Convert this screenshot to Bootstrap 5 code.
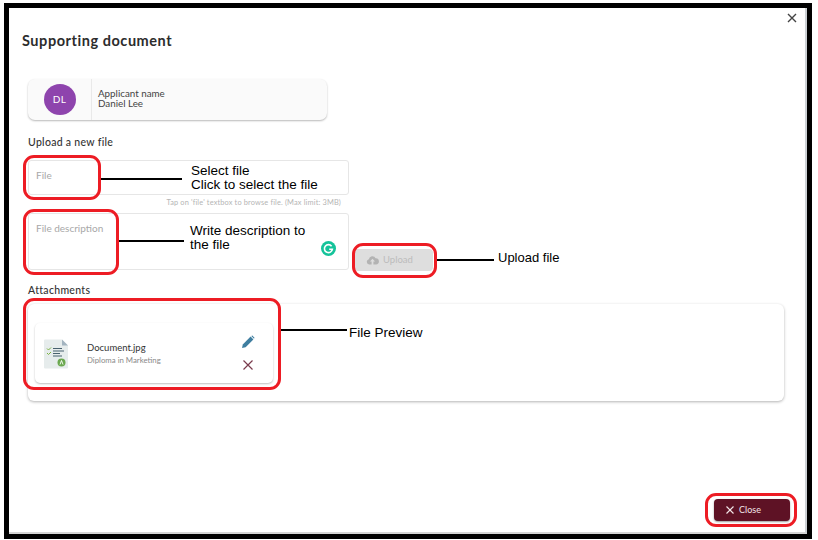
<!DOCTYPE html>
<html lang="en">
<head>
<meta charset="utf-8">
<title>Supporting document</title>
<link href="https://cdn.jsdelivr.net/npm/bootstrap@5.3.0/dist/css/bootstrap.min.css" rel="stylesheet">
<style>
html,body{height:100%;background:#fff;overflow:hidden}
body{font-family:"Lato","Open Sans",sans-serif;color:#333}
.shot-frame{position:relative;box-sizing:border-box;margin:3px 0 0 4px;width:808px;height:536px;border:5px solid #000;background:#fff}
.dlg-body{position:relative;height:100%;border-right:2px solid #ccd0d4;border-bottom:2px solid #d4d4d4;padding:0 0 0 13px;display:flex;flex-direction:column}
.dlg-title{font-size:14.5px;font-weight:700;color:#2c2c2c;margin:24px 0 0 0;line-height:17px;letter-spacing:.55px}
.dlg-x{position:absolute;right:6px;top:3px;width:14px;height:14px;padding:0;border:0;background:none;line-height:0}
.applicant{width:299px;height:41px;margin:30px 0 0 6px;background:#fafafa;border-radius:7px;box-shadow:0 1px 2px rgba(0,0,0,.28)}
.avatar-col{width:64px;border-right:1px solid #e9e9e9}
.avatar-dot{width:32px;height:31px;border-radius:50%;background:#8e44ad;color:#fff;font-size:10px;letter-spacing:.4px}
.app-txt{font-size:9.800px;line-height:10px;padding:0 0 4px 6px;color:#444}
.sect-label{font-size:10.500px;line-height:12px;color:#333;font-weight:500;margin-left:6px;letter-spacing:.3px}
.up-label{margin-top:16px}
.file-box{width:321px;border:1px solid #e6e6e6;border-radius:3px;margin-left:6px;background:#fff;font-size:10px;color:#a8a8a8;padding:0 7px}
.file-one{height:35px;margin-top:12px;padding-top:7px;line-height:14px}
.hint-txt{width:313px;margin:3px 0 0 6px;text-align:right;font-size:7.400px;line-height:10px;color:#b5b5b5;letter-spacing:.15px}
.desc-row{margin-top:5px}
.file-two{height:57px;padding-top:8px;line-height:12px;position:relative}
.gly-g{position:absolute;right:12px;bottom:13px;width:15px;height:15px;border-radius:50%;background:#15c39a;line-height:0}
.up-btn,.up-btn:disabled{width:79px;height:22px;margin:0 0 -1px 5px;padding:0 0 0 12px;border:0;border-radius:4px;background:#dedede;color:#bcbcbc;font-size:9.500px;opacity:1}
.att-label{margin-top:14px}
.att-panel{width:756px;height:97px;margin:8px 0 0 6px;background:#fff;border-radius:6px;box-shadow:0 1px 3px rgba(0,0,0,.3);padding:19px 0 0 7px}
.doc-card{width:238px;height:60px;background:#fff;border-radius:5px;box-shadow:0 1px 2px rgba(0,0,0,.25);padding:2px 17px 0 8px}
.doc-ic{width:26px;height:30px;margin-right:18px;line-height:0}
.doc-name{font-size:9.500px;line-height:12px;color:#333}
.doc-sub{font-size:7.800px;line-height:13px;color:#8a8a8a}
.doc-tools{width:16px;gap:10px;line-height:0;margin-top:-2px}
.foot-row{margin-top:auto;padding:0 15px 11px 0}
.close-btn{width:76px;height:22px;padding:0 0 0 11px;border:0;border-radius:4px;background:#5e1225;color:#f2e6e8;font-size:9px;box-shadow:0 1px 2px rgba(0,0,0,.4)}
.close-btn:hover{background:#5e1225;color:#f2e6e8}
.note-ring{position:absolute;border:3px solid #ed1c24;border-radius:11px;pointer-events:none}
.note-line{position:absolute;height:2px;background:#000}
.note-txt{position:absolute;font-family:"Liberation Sans",Arial,sans-serif;font-size:13.500px;line-height:14px;color:#000;white-space:nowrap}
.ring-a{left:14px;top:147px;width:78px;height:45px}
.ring-b{left:14px;top:201px;width:96px;height:66px}
.ring-c{left:343px;top:235px;width:85px;height:35px}
.ring-d{left:14px;top:290px;width:258px;height:92px}
.ring-e{left:696px;top:485px;width:92px;height:34px}
.line-a{left:92px;top:170px;width:81px}
.line-b{left:110px;top:232px;width:65px}
.line-c{left:428px;top:251px;width:57px}
.line-d{left:272px;top:321px;width:66px}
.txt-a{left:182px;top:156px}
.txt-b{left:181px;top:216px}
.txt-c{left:489px;top:243px;font-size:13px}
.txt-d{left:340px;top:318px}
</style>
</head>
<body>
<div class="shot-frame">
  <div class="dlg-body">
    <button class="dlg-x" type="button" aria-label="Close"><svg width="14" height="14" viewBox="0 0 14 14"><path d="M3 3l8 8M11 3l-8 8" stroke="#444" stroke-width="1.400" fill="none"/></svg></button>
    <h5 class="dlg-title">Supporting document</h5>
    <div class="applicant d-flex">
      <div class="avatar-col d-flex align-items-center justify-content-center"><div class="avatar-dot d-flex align-items-center justify-content-center">DL</div></div>
      <div class="app-txt d-flex flex-column justify-content-center"><div>Applicant name</div><div>Daniel Lee</div></div>
    </div>
    <div class="sect-label up-label">Upload a new file</div>
    <div class="file-box file-one">File</div>
    <div class="hint-txt">Tap on 'file' textbox to browse file. (Max limit: 3MB)</div>
    <div class="desc-row d-flex align-items-end">
      <div class="file-box file-two">File description
        <span class="gly-g d-inline-block"><svg width="15" height="15" viewBox="0 0 15 15"><path d="M10.600 5.200A4 4 0 1 0 11.400 8.200H8.200" stroke="#fff" stroke-width="1.600" fill="none"/></svg></span>
      </div>
      <button class="btn up-btn d-flex align-items-center gap-1" type="button" disabled><svg width="13" height="10" viewBox="0 0 13 10"><path d="M3.200 9.500A2.700 2.700 0 0 1 2.800 4.200 3.600 3.600 0 0 1 9.600 3.300 3.100 3.100 0 0 1 10 9.500H7.400V6.400H9L6.500 3.800 4 6.400h1.600v3.100z" fill="#b3b3b3"/></svg>Upload</button>
    </div>
    <div class="sect-label att-label">Attachments</div>
    <div class="att-panel">
      <div class="doc-card d-flex align-items-center">
        <div class="doc-ic"><svg width="26" height="30" viewBox="0 0 26 30"><path d="M1 1.500Q1 .5 2 .5H19L25 6.500V28.500Q25 29.500 24 29.500H2Q1 29.500 1 28.500z" fill="#e6ecec"/><path d="M19 .5L25 6.500H19z" fill="#a3b4c0"/><path d="M4 9.500l1.500 1.500 2.500-2.500M4 14l1.500 1.500 2.500-2.500" stroke="#7cb342" stroke-width="1" fill="none"/><path d="M10 9.500h9M10 12h11M10 14.500h7M10 17h9" stroke="#47606e" stroke-width="1"/><circle cx="18.500" cy="23.500" r="4" fill="#6aa84f"/><path d="M17 25.500l1.500-4 1.500 4" stroke="#fff" stroke-width=".9" fill="none"/></svg></div>
        <div class="flex-grow-1"><div class="doc-name">Document.jpg</div><div class="doc-sub">Diploma in Marketing</div></div>
        <div class="doc-tools d-flex flex-column align-items-center">
          <svg width="14" height="14" viewBox="0 0 14 14"><path d="M1 13l.8-3.600L9.600 1.600l2.800 2.800L4.600 12.200z" fill="#3f7ea0"/><path d="M10.300 1l1-.5 2.200 2.200-.5 1z" fill="#3f7ea0"/></svg>
          <svg width="12" height="12" viewBox="0 0 12 12"><path d="M1.500 1.500l9 9M10.500 1.500l-9 9" stroke="#7a3b4d" stroke-width="1.200" fill="none"/></svg>
        </div>
      </div>
    </div>
    <div class="foot-row d-flex justify-content-end">
      <button class="btn close-btn d-flex align-items-center gap-1" type="button"><svg width="10" height="10" viewBox="0 0 10 10"><path d="M1.500 1.500l7 7M8.500 1.500l-7 7" stroke="#f2e6e8" stroke-width="1.200" fill="none"/></svg>Close</button>
    </div>
  </div>
  <div class="note-ring ring-a"></div><div class="note-ring ring-b"></div><div class="note-ring ring-c"></div><div class="note-ring ring-d"></div><div class="note-ring ring-e"></div>
  <div class="note-line line-a"></div><div class="note-line line-b"></div><div class="note-line line-c"></div><div class="note-line line-d"></div>
  <div class="note-txt txt-a">Select file<br>Click to select the file</div>
  <div class="note-txt txt-b">Write description to<br>the file</div>
  <div class="note-txt txt-c">Upload file</div>
  <div class="note-txt txt-d">File Preview</div>
</div>
</body>
</html>
